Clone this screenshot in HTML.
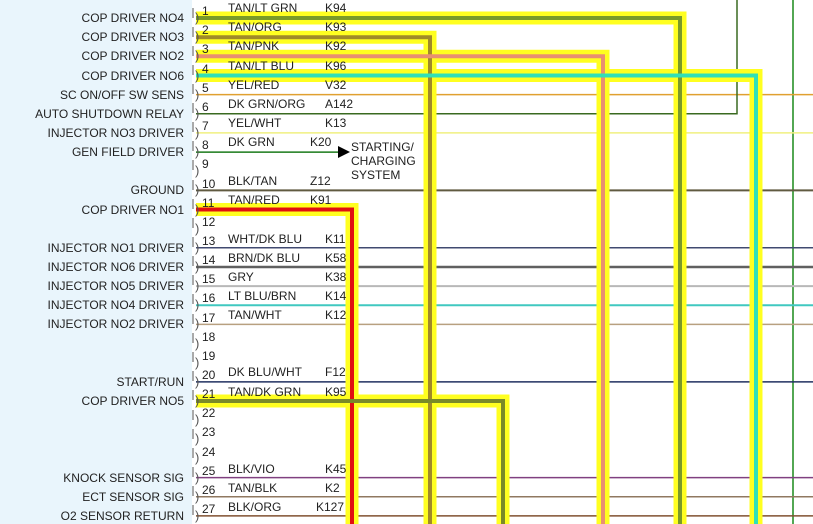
<!DOCTYPE html>
<html><head><meta charset="utf-8"><style>
html,body{margin:0;padding:0;background:#fff;}
svg{display:block;font-family:"Liberation Sans",Arial,sans-serif;font-size:12px;}
</style></head><body>
<svg width="813" height="524" viewBox="0 0 813 524" xmlns="http://www.w3.org/2000/svg">
<rect x="0" y="0" width="192" height="524" fill="#e9f5fc"/>
<!-- right vertical lines -->
<line x1="793" y1="0" x2="793" y2="524" stroke="#1a8a1a" stroke-width="1.5"/>
<!-- thin wires -->
<g fill="none" stroke-width="1.5">
<line x1="196" y1="94.6" x2="813" y2="94.6" stroke="#e0a030"/>
<polyline points="196,113.8 737,113.8 737,0" stroke="#3a6a20"/>
<line x1="196" y1="132.9" x2="813" y2="132.9" stroke="#f0f080"/>
<line x1="196" y1="152.1" x2="340" y2="152.1" stroke="#1a7a1a"/>
<line x1="196" y1="190.4" x2="813" y2="190.4" stroke="#605a40" stroke-width="2"/>
<line x1="196" y1="247.8" x2="813" y2="247.8" stroke="#404a70"/>
<line x1="196" y1="267" x2="813" y2="267" stroke="#606060" stroke-width="2.5"/>
<line x1="196" y1="286.1" x2="813" y2="286.1" stroke="#b8b8b8" stroke-width="2"/>
<line x1="196" y1="305.3" x2="813" y2="305.3" stroke="#40c8c0" stroke-width="2"/>
<line x1="196" y1="324.4" x2="813" y2="324.4" stroke="#b8a080" stroke-width="1.5"/>
<line x1="196" y1="381.9" x2="813" y2="381.9" stroke="#203060"/>
<line x1="196" y1="477.6" x2="813" y2="477.6" stroke="#804080"/>
<line x1="196" y1="496.8" x2="813" y2="496.8" stroke="#907860"/>
<line x1="196" y1="515.9" x2="813" y2="515.9" stroke="#805030"/>
</g>
<polygon points="338,146 338,158 350,152" fill="#000"/>
<!-- highlighted wires -->
<g fill="none" stroke-linejoin="miter">
<g stroke="#ffff20" stroke-width="13">
<polyline points="196,18 680,18 680,524"/>
<polyline points="196,37.2 430,37.2 430,524"/>
<polyline points="196,56.3 603,56.3 603,524"/>
<polyline points="196,75.5 756,75.5 756,524"/>
<polyline points="196,209.5 352,209.5 352,524"/>
<polyline points="196,401 503,401 503,524"/>
</g>
<polyline points="196,18 680,18 680,524" stroke="#7a9a28" stroke-width="4"/>
<polyline points="196,37.2 430,37.2 430,524" stroke="#a08a28" stroke-width="4"/>
<polyline points="196,56.3 603,56.3 603,524" stroke="#e89070" stroke-width="4"/>
<polyline points="196,75.5 756,75.5 756,524" stroke="#30e0b8" stroke-width="4"/>
<polyline points="196,209.5 352,209.5 352,524" stroke="#e01010" stroke-width="4"/>
<polyline points="196,401 503,401 503,524" stroke="#7a8a28" stroke-width="4"/>
</g>
<!-- connector marks -->
<g stroke="#555" stroke-width="1" fill="none">
<path d="M193,8v10M193,27v10M193,46v10M193,65v10M193,84v10M193,103v10M193,122v10M193,141v10M193,160v10M193,180v10M193,199v10M193,218v10M193,237v10M193,256v10M193,275v10M193,294v10M193,314v10M193,333v10M193,352v10M193,371v10M193,390v10M193,410v10M193,429v10M193,448v10M193,467v10M193,486v10M193,505v10"/>
</g>
<g font-size="13" fill="#555">
<text x="195" y="22">)</text><text x="195" y="41">)</text><text x="195" y="60">)</text><text x="195" y="80">)</text><text x="195" y="99">)</text><text x="195" y="118">)</text><text x="195" y="137">)</text><text x="195" y="156">)</text><text x="195" y="175">)</text><text x="195" y="194">)</text><text x="195" y="214">)</text><text x="195" y="233">)</text><text x="195" y="252">)</text><text x="195" y="271">)</text><text x="195" y="290">)</text><text x="195" y="309">)</text><text x="195" y="328">)</text><text x="195" y="348">)</text><text x="195" y="367">)</text><text x="195" y="386">)</text><text x="195" y="405">)</text><text x="195" y="424">)</text><text x="195" y="443">)</text><text x="195" y="462">)</text><text x="195" y="482">)</text><text x="195" y="501">)</text><text x="195" y="520">)</text>
</g>
<!-- left labels -->
<g text-anchor="end" fill="#222">
<text x="184" y="22">COP DRIVER NO4</text>
<text x="184" y="41">COP DRIVER NO3</text>
<text x="184" y="60">COP DRIVER NO2</text>
<text x="184" y="80">COP DRIVER NO6</text>
<text x="184" y="99">SC ON/OFF SW SENS</text>
<text x="184" y="118">AUTO SHUTDOWN RELAY</text>
<text x="184" y="137">INJECTOR NO3 DRIVER</text>
<text x="184" y="156">GEN FIELD DRIVER</text>
<text x="184" y="194">GROUND</text>
<text x="184" y="214">COP DRIVER NO1</text>
<text x="184" y="252">INJECTOR NO1 DRIVER</text>
<text x="184" y="271">INJECTOR NO6 DRIVER</text>
<text x="184" y="290">INJECTOR NO5 DRIVER</text>
<text x="184" y="309">INJECTOR NO4 DRIVER</text>
<text x="184" y="328">INJECTOR NO2 DRIVER</text>
<text x="184" y="386">START/RUN</text>
<text x="184" y="405">COP DRIVER NO5</text>
<text x="184" y="482">KNOCK SENSOR SIG</text>
<text x="184" y="501">ECT SENSOR SIG</text>
<text x="184" y="520">O2 SENSOR RETURN</text>
</g>
<!-- pin numbers -->
<g fill="#222">
<text x="202" y="15">1</text><text x="202" y="34">2</text><text x="202" y="53">3</text><text x="202" y="73">4</text><text x="202" y="92">5</text><text x="202" y="111">6</text><text x="202" y="130">7</text><text x="202" y="149">8</text><text x="202" y="168">9</text><text x="202" y="188">10</text><text x="202" y="207">11</text><text x="202" y="226">12</text><text x="202" y="245">13</text><text x="202" y="264">14</text><text x="202" y="283">15</text><text x="202" y="302">16</text><text x="202" y="322">17</text><text x="202" y="341">18</text><text x="202" y="360">19</text><text x="202" y="379">20</text><text x="202" y="398">21</text><text x="202" y="417">22</text><text x="202" y="436">23</text><text x="202" y="456">24</text><text x="202" y="475">25</text><text x="202" y="494">26</text><text x="202" y="513">27</text>
</g>
<!-- wire colors & codes -->
<g fill="#222">
<text x="228" y="12">TAN/LT GRN</text><text x="325" y="12">K94</text>
<text x="228" y="31">TAN/ORG</text><text x="325" y="31">K93</text>
<text x="228" y="50">TAN/PNK</text><text x="325" y="50">K92</text>
<text x="228" y="70">TAN/LT BLU</text><text x="325" y="70">K96</text>
<text x="228" y="89">YEL/RED</text><text x="325" y="89">V32</text>
<text x="228" y="108">DK GRN/ORG</text><text x="325" y="108">A142</text>
<text x="228" y="127">YEL/WHT</text><text x="325" y="127">K13</text>
<text x="228" y="146">DK GRN</text><text x="310" y="146">K20</text>
<text x="351" y="151">STARTING/</text><text x="351" y="165">CHARGING</text><text x="351" y="179">SYSTEM</text>
<text x="228" y="185">BLK/TAN</text><text x="310" y="185">Z12</text>
<text x="228" y="204">TAN/RED</text><text x="310" y="204">K91</text>
<text x="228" y="243">WHT/DK BLU</text><text x="325" y="243">K11</text>
<text x="228" y="262">BRN/DK BLU</text><text x="325" y="262">K58</text>
<text x="228" y="281">GRY</text><text x="325" y="281">K38</text>
<text x="228" y="300">LT BLU/BRN</text><text x="325" y="300">K14</text>
<text x="228" y="319">TAN/WHT</text><text x="325" y="319">K12</text>
<text x="228" y="376">DK BLU/WHT</text><text x="325" y="376">F12</text>
<text x="228" y="396">TAN/DK GRN</text><text x="325" y="396">K95</text>
<text x="228" y="473">BLK/VIO</text><text x="325" y="473">K45</text>
<text x="228" y="492">TAN/BLK</text><text x="325" y="492">K2</text>
<text x="228" y="511">BLK/ORG</text><text x="316" y="511">K127</text>
</g>
</svg>
</body></html>
